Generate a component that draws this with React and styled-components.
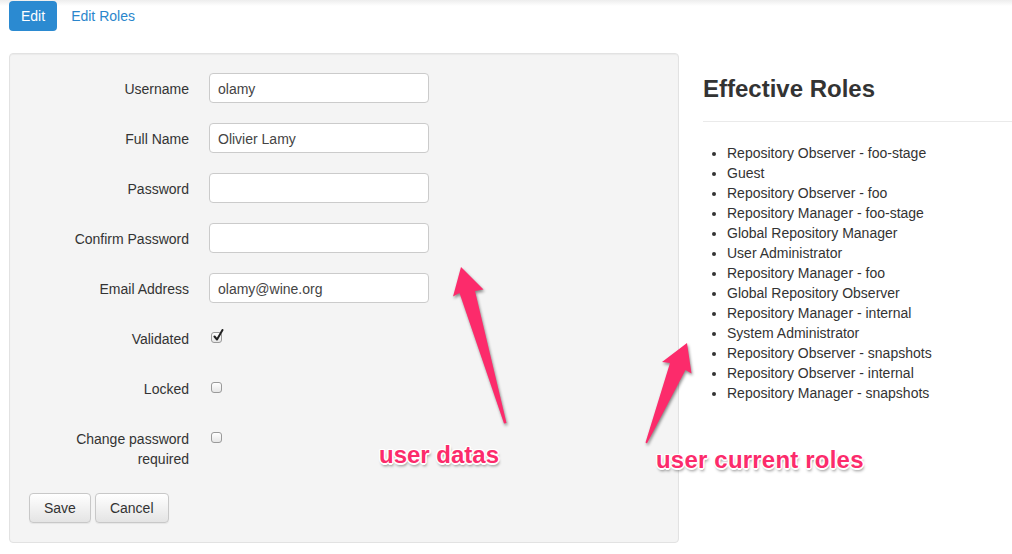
import React from "react";
import styled, { createGlobalStyle } from "styled-components";

const GlobalStyle = createGlobalStyle`
  html, body {
    margin: 0;
    padding: 0;
  }
  body {
    font-family: "Liberation Sans", Arial, Helvetica, sans-serif;
    font-size: 14px;
    color: #333;
    background: linear-gradient(#ededed, #ffffff 6px);
  }
`;

const Page = styled.div`
  position: relative;
  width: 1012px;
  height: 554px;
  overflow: hidden;
  box-sizing: border-box;
  padding: 1px 0 0 9px;
`;

const Nav = styled.nav`
  display: flex;
  gap: 2px;
`;

const Pill = styled.a`
  display: block;
  height: 30px;
  line-height: 31px;
  padding: 0 12px;
  border-radius: 4px;
  font-size: 14px;
  text-decoration: none;
  color: ${(p) => (p.$active ? "#fff" : "#2a86cc")};
  background: ${(p) => (p.$active ? "#2b8ad1" : "transparent")};
`;

const Main = styled.div`
  display: grid;
  grid-template-columns: 670px 1fr;
  column-gap: 24px;
  margin-top: 22px;
  align-items: start;
`;

const Well = styled.form`
  background: #f4f4f4;
  border: 1px solid #e2e2e2;
  border-radius: 4px;
  padding: 19px;
  box-shadow: inset 0 1px 1px rgba(0, 0, 0, 0.04);
`;

const FormRow = styled.div`
  display: grid;
  grid-template-columns: 160px 220px;
  column-gap: 20px;
  margin-bottom: 20px;
  align-items: start;
`;

const Label = styled.label`
  text-align: right;
  padding-top: 6px;
  line-height: 20px;
  color: #333;
`;

const TextInput = styled.input`
  box-sizing: border-box;
  width: 220px;
  height: 30px;
  padding: 1px 8px 0;
  border: 1px solid #cbcbcb;
  border-radius: 4px;
  background: #fff;
  font-family: "Liberation Sans", Arial, sans-serif;
  font-size: 14px;
  color: #444;
  outline: none;
`;

const CheckCell = styled.div`
  position: relative;
  padding: 9px 0 0 2px;
  height: 21px;
`;

const CheckBox = styled.span`
  position: relative;
  display: block;
  box-sizing: border-box;
  width: 11px;
  height: 11px;
  border: 1px solid #9a9a9a;
  border-radius: 3px;
  background: linear-gradient(#ffffff, #e6e6e6);
`;

const CheckMark = styled.svg`
  position: absolute;
  left: 1px;
  top: -4px;
`;

const Actions = styled.div`
  display: flex;
  gap: 4px;
  margin-top: 24px;
`;

const Button = styled.button`
  box-sizing: border-box;
  height: 30px;
  padding: 0 14px;
  border: 1px solid #c8c8c8;
  border-radius: 4px;
  background: linear-gradient(#ffffff, #e4e4e4);
  font-family: "Liberation Sans", Arial, sans-serif;
  font-size: 14px;
  color: #333;
  box-shadow: 0 1px 1px rgba(0, 0, 0, 0.06);
`;

const Side = styled.section``;

const Heading = styled.h2`
  margin: 23px 0 19px;
  font-size: 24px;
  line-height: 26px;
  font-weight: bold;
  color: #333;
`;

const Rule = styled.hr`
  margin: 0;
  border: 0;
  border-top: 1px solid #eaeaea;
`;

const RoleList = styled.ul`
  margin: 21px 0 0;
  padding-left: 24px;
  line-height: 20px;
  font-size: 14px;
  color: #333;
`;

const Overlay = styled.div`
  position: absolute;
  inset: 0;
  pointer-events: none;
`;

const ArrowLayer = styled.svg`
  position: absolute;
  left: 0;
  top: 0;
  filter: drop-shadow(1px 2px 1.5px rgba(0, 0, 0, 0.45));
`;

const Note = styled.div`
  position: absolute;
  left: ${(p) => p.$x}px;
  top: ${(p) => p.$y}px;
  font-family: "Liberation Sans", Arial, sans-serif;
  font-weight: bold;
  font-size: 24px;
  line-height: 24px;
  color: #fc2b6b;
  white-space: nowrap;
  letter-spacing: ${(p) => p.$ls || 0}px;
  text-shadow: 1.5px 0 0 #fff, -1.5px 0 0 #fff, 0 1.5px 0 #fff, 0 -1.5px 0 #fff,
    1px 1px 0 #fff, -1px -1px 0 #fff, 1px -1px 0 #fff, -1px 1px 0 #fff,
    1px 3px 3px rgba(0, 0, 0, 0.45);
`;

const roles = [
  "Repository Observer - foo-stage",
  "Guest",
  "Repository Observer - foo",
  "Repository Manager - foo-stage",
  "Global Repository Manager",
  "User Administrator",
  "Repository Manager - foo",
  "Global Repository Observer",
  "Repository Manager - internal",
  "System Administrator",
  "Repository Observer - snapshots",
  "Repository Observer - internal",
  "Repository Manager - snapshots",
];

const textFields = [
  { label: "Username", value: "olamy", type: "text" },
  { label: "Full Name", value: "Olivier Lamy", type: "text" },
  { label: "Password", value: "", type: "password" },
  { label: "Confirm Password", value: "", type: "password" },
  { label: "Email Address", value: "olamy@wine.org", type: "text" },
];

const checkFields = [
  { label: "Validated", checked: true },
  { label: "Locked", checked: false },
  { label: "Change password required", checked: false },
];

function Check({ checked }) {
  return (
    <CheckCell>
      <CheckBox>
        {checked && (
          <CheckMark width="12" height="13" viewBox="0 0 12 13">
            <path
              d="M1.5 7.5 L4 10.5 L9.5 1"
              fill="none"
              stroke="#222"
              strokeWidth="2"
              strokeLinecap="round"
              strokeLinejoin="round"
            />
          </CheckMark>
        )}
      </CheckBox>
    </CheckCell>
  );
}

export default function App() {
  return (
    <>
      <GlobalStyle />
      <Page>
        <Nav>
          <Pill $active href="#">Edit</Pill>
          <Pill href="#">Edit Roles</Pill>
        </Nav>
        <Main>
          <Well onSubmit={(e) => e.preventDefault()}>
            {textFields.map((f) => (
              <FormRow key={f.label}>
                <Label>{f.label}</Label>
                <TextInput type={f.type} defaultValue={f.value} />
              </FormRow>
            ))}
            {checkFields.map((f) => (
              <FormRow key={f.label}>
                <Label>{f.label}</Label>
                <Check checked={f.checked} />
              </FormRow>
            ))}
            <Actions>
              <Button type="button">Save</Button>
              <Button type="button">Cancel</Button>
            </Actions>
          </Well>
          <Side>
            <Heading>Effective Roles</Heading>
            <Rule />
            <RoleList>
              {roles.map((r) => (
                <li key={r}>{r}</li>
              ))}
            </RoleList>
          </Side>
        </Main>
        <Overlay>
          <ArrowLayer width="1012" height="554" viewBox="0 0 1012 554">
            <polygon
              fill="#fc2b6b"
              points="461,267 483.5,289.5 475,291 506.5,423 504,423.5 459.5,293 453,296.5"
            />
            <polygon
              fill="#fc2b6b"
              points="687,343 691.5,373.5 685.5,370 647,443.5 645.5,442.5 670,363 662,362"
            />
          </ArrowLayer>
          <Note $x={379} $y={443}>user datas</Note>
          <Note $x={656} $y={448} $ls={0.2}>user current roles</Note>
        </Overlay>
      </Page>
    </>
  );
}
